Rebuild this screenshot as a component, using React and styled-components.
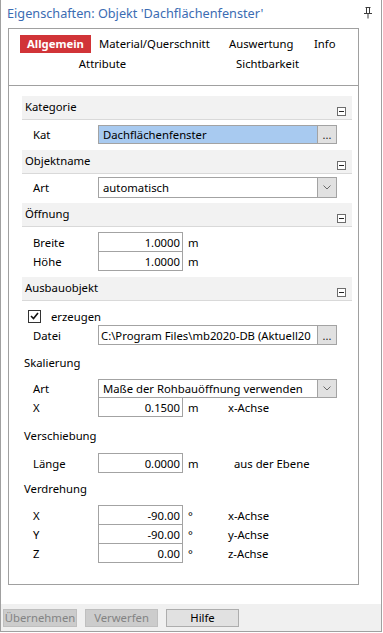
import React from 'react';
import styled, { createGlobalStyle } from 'styled-components';

const GlobalStyle = createGlobalStyle`
    html, body {
        margin: 0;
        padding: 0;
        background: #fff;
    }
    body {
        font-family: "Noto Sans", "Open Sans", sans-serif;
        font-size: 11.3px;
        color: #000;
    }
`;

const Window = styled.div`
    width: 382px;
    height: 632px;
    box-sizing: border-box;
    border: 1px solid #a0a0a0;
    border-top: none;
    display: flex;
    flex-direction: column;
    background: #fff;
`;

const TitleBar = styled.div`
    height: 28px;
    box-sizing: border-box;
    display: flex;
    align-items: center;
    justify-content: space-between;
    padding: 0 9px 2px 6px;
`;

const Title = styled.span`
    font-size: 12.7px;
    color: #3b6cb3;
    white-space: nowrap;
`;

const Panel = styled.div`
    height: 557px;
    box-sizing: border-box;
    margin: 0 22px 0 7px;
    border: 1px solid #a0a0a0;
`;

const Tabs = styled.div`
    height: 57px;
    box-sizing: border-box;
    border-bottom: 1px solid #a0a0a0;
    padding: 6px 0 0 11px;
`;

const TabRow = styled.div`
    display: grid;
    grid-template-columns: ${p => p.$cols};
    height: 18px;
    margin-top: ${p => p.$top || 0}px;
`;

const Tab = styled.span`
    justify-self: ${p => (p.$center ? 'center' : 'start')};
    padding: 0 ${p => (p.$active ? 7 : 6)}px;
    line-height: 18px;
    white-space: nowrap;
    font-weight: ${p => (p.$active ? 700 : 400)};
    color: ${p => (p.$active ? '#fff' : '#000')};
    background: ${p => (p.$active ? '#d13438' : 'transparent')};
`;

const Content = styled.div`
    padding: 10px 6px 0 13px;
    display: flex;
    flex-direction: column;
`;

const Header = styled.div`
    height: 24px;
    box-sizing: border-box;
    margin-top: ${p => p.$top || 0}px;
    display: flex;
    justify-content: space-between;
    background: #f2f2f2;
    border-bottom: 1px solid #d9d9d9;
    padding: 0 6px 0 3px;
    line-height: 22px;
`;

const Collapse = styled.span`
    align-self: flex-end;
    margin-bottom: 3px;
    width: 9px;
    height: 9px;
    box-sizing: border-box;
    border: 1px solid #6d6d6d;
    background: #fff;
    display: flex;
    align-items: center;
    justify-content: center;
    &::after {
        content: '';
        width: 5px;
        height: 1px;
        background: #222;
    }
`;

const Row = styled.div`
    display: flex;
    align-items: center;
    height: ${p => p.$h || 20}px;
    margin-top: ${p => p.$top || 0}px;
    padding-left: 11px;
`;

const Label = styled.span`
    width: 65px;
    flex: none;
`;

const SubLabel = styled.div`
    height: 16px;
    line-height: 16px;
    padding-left: 2px;
    margin-top: ${p => p.$top || 0}px;
`;

const Field = styled.div`
    width: 239px;
    height: 100%;
    box-sizing: border-box;
    display: flex;
    border: 1px solid #a3a3a3;
    background: #fff;
`;

const FieldText = styled.span`
    flex: 1;
    min-width: 0;
    overflow: hidden;
    white-space: nowrap;
    padding-left: ${p => p.$pad || 4}px;
    display: flex;
    align-items: center;
    background: ${p => (p.$selected ? '#a8caf0' : '#fff')};
`;

const SideButton = styled.span`
    width: 18px;
    flex: none;
    border-left: 1px solid #a3a3a3;
    background: #e1e1e1;
    display: flex;
    align-items: center;
    justify-content: center;
    font-size: 11px;
    line-height: 1;
    color: #222;
`;

const NumberBox = styled.span`
    width: 85px;
    height: 100%;
    box-sizing: border-box;
    border: 1px solid #a3a3a3;
    padding-right: 2px;
    display: flex;
    align-items: center;
    justify-content: flex-end;
    flex: none;
`;

const Unit = styled.span`
    width: 45px;
    padding-left: 5px;
    box-sizing: border-box;
    flex: none;
`;

const Axis = styled.span`
    padding-left: ${p => p.$shift || 0}px;
    white-space: nowrap;
`;

const CheckRow = styled.label`
    display: flex;
    align-items: center;
    gap: 10px;
    height: 16px;
    margin-top: 7px;
    padding-left: 6px;
`;

const CheckBox = styled.span`
    width: 13px;
    height: 13px;
    box-sizing: border-box;
    border: 1px solid #333;
    display: flex;
    align-items: center;
    justify-content: center;
`;

const Spacer = styled.div`
    height: 19px;
    flex: none;
`;

const Footer = styled.div`
    height: 27px;
    box-sizing: border-box;
    background: #f0f0f0;
    display: flex;
    gap: 8px;
    padding: 5px 0 0 2px;
`;

const FooterButton = styled.button`
    width: ${p => p.$w}px;
    height: 18px;
    box-sizing: border-box;
    padding: 0;
    font: 11.3px "Noto Sans", "Open Sans", sans-serif;
    line-height: 16px;
    border: 1px solid ${p => (p.disabled ? '#bfbfbf' : '#adadad')};
    background: ${p => (p.disabled ? '#cccccc' : '#e1e1e1')};
    color: ${p => (p.disabled ? '#838383' : '#000')};
`;

const Pin = () => (
    <svg width="8" height="12" viewBox="0 0 8 12" fill="none" stroke="#3c3c3c">
        <path d="M1.5 0.5h5M2.5 0.5v6M5.5 0.5v6M0 6.5h8M4 6.5v5" />
    </svg>
);

const Chevron = () => (
    <svg width="8" height="5" viewBox="0 0 8 5" fill="none" stroke="#6a6a6a">
        <path d="M0.5 0.5l3.5 3.5 3.5-3.5" />
    </svg>
);

const Check = () => (
    <svg width="9" height="8" viewBox="0 0 9 8" fill="none" stroke="#111" strokeWidth="1.6">
        <path d="M1 4l2.5 2.5L8 1" />
    </svg>
);

const Section = ({ title, top }) => (
    <Header $top={top}>
        <span>{title}</span>
        <Collapse />
    </Header>
);

const ValueRow = ({ label, value, unit, axis, shift, top }) => (
    <Row $top={top}>
        <Label>{label}</Label>
        <NumberBox>{value}</NumberBox>
        <Unit>{unit}</Unit>
        {axis && <Axis $shift={shift}>{axis}</Axis>}
    </Row>
);

export default function App() {
    return (
        <>
            <GlobalStyle />
            <Window>
                <TitleBar>
                    <Title>Eigenschaften: Objekt 'Dachflächenfenster'</Title>
                    <Pin />
                </TitleBar>
                <Panel>
                    <Tabs>
                        <TabRow $cols="73px 130px 85px auto">
                            <Tab $active>Allgemein</Tab>
                            <Tab>Material/Querschnitt</Tab>
                            <Tab>Auswertung</Tab>
                            <Tab>Info</Tab>
                        </TabRow>
                        <TabRow $cols="165px 165px" $top={2}>
                            <Tab $center>Attribute</Tab>
                            <Tab $center>Sichtbarkeit</Tab>
                        </TabRow>
                    </Tabs>
                    <Content>
                        <Section title="Kategorie" />
                        <Row $top={5} $h={19}>
                            <Label>Kat</Label>
                            <Field>
                                <FieldText $selected>Dachflächenfenster</FieldText>
                                <SideButton>...</SideButton>
                            </Field>
                        </Row>

                        <Section title="Objektname" top={6} />
                        <Row $top={3} $h={21}>
                            <Label>Art</Label>
                            <Field>
                                <FieldText>automatisch</FieldText>
                                <SideButton>
                                    <Chevron />
                                </SideButton>
                            </Field>
                        </Row>

                        <Section title="Öffnung" top={5} />
                        <ValueRow top={5} label="Breite" value="1.0000" unit="m" />
                        <ValueRow top={-1} label="Höhe" value="1.0000" unit="m" />

                        <Section title="Ausbauobjekt" top={6} />
                        <CheckRow>
                            <CheckBox>
                                <Check />
                            </CheckBox>
                            erzeugen
                        </CheckRow>
                        <Row $top={1}>
                            <Label>Datei</Label>
                            <Field>
                                <FieldText $pad={2}>C:\Program Files\mb2020-DB (Aktuell20</FieldText>
                                <SideButton>...</SideButton>
                            </Field>
                        </Row>

                        <SubLabel $top={10}>Skalierung</SubLabel>
                        <Row $top={8} $h={19}>
                            <Label>Art</Label>
                            <Field>
                                <FieldText>Maße der Rohbauöffnung verwenden</FieldText>
                                <SideButton>
                                    <Chevron />
                                </SideButton>
                            </Field>
                        </Row>
                        <ValueRow top={-1} label="X" value="0.1500" unit="m" axis="x-Achse" />

                        <SubLabel $top={11}>Verschiebung</SubLabel>
                        <ValueRow top={9} label="Länge" value="0.0000" unit="m" axis="aus der Ebene" shift={6} />

                        <SubLabel $top={8}>Verdrehung</SubLabel>
                        <ValueRow top={8} label="X" value="-90.00" unit="°" axis="x-Achse" />
                        <ValueRow top={-1} label="Y" value="-90.00" unit="°" axis="y-Achse" />
                        <ValueRow top={-1} label="Z" value="0.00" unit="°" axis="z-Achse" />
                    </Content>
                </Panel>
                <Spacer />
                <Footer>
                    <FooterButton $w={74} disabled>Übernehmen</FooterButton>
                    <FooterButton $w={73} disabled>Verwerfen</FooterButton>
                    <FooterButton $w={73}>Hilfe</FooterButton>
                </Footer>
            </Window>
        </>
    );
}
